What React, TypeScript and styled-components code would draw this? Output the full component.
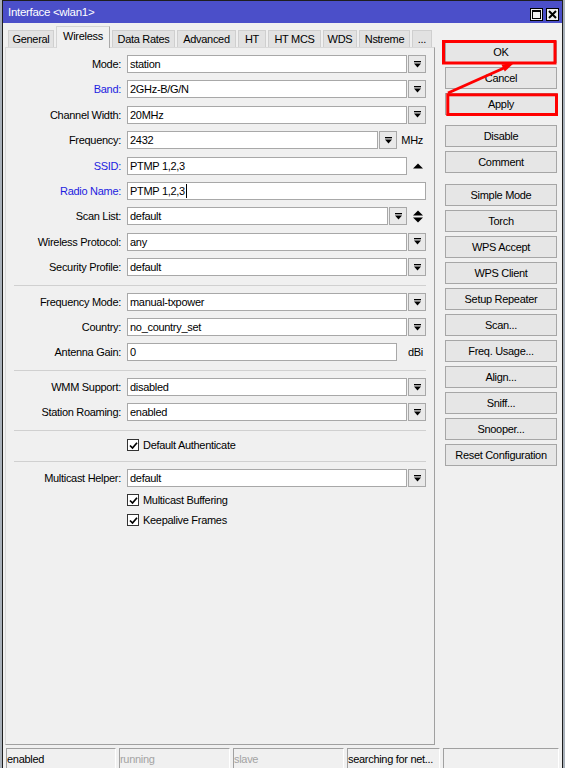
import styled, { createGlobalStyle } from "styled-components";

const GlobalStyle = createGlobalStyle`
  html, body {
    margin: 0;
    padding: 0;
    overflow: hidden;
  }
  body {
    background: #a9b1ba;
    font-family: "Liberation Sans", Arial, sans-serif;
    font-size: 11px;
    letter-spacing: -0.3px;
    color: #000;
  }
`;

const Desktop = styled.div`
  position: relative;
  width: 565px;
  height: 768px;
  overflow: hidden;
`;

const Window = styled.div`
  margin-left: 2px;
  width: 561px;
  height: 768px;
  box-sizing: border-box;
  border: 1px solid #1e1e1e;
  border-bottom: none;
  background: #f0f0f0;
  display: flex;
  flex-direction: column;
`;

const TitleBar = styled.div`
  height: 22px;
  flex-shrink: 0;
  background: #4b4fc9;
  color: #fff;
  display: flex;
  align-items: center;
  justify-content: space-between;
  padding: 0 3px 0 5px;
`;

const TitleText = styled.span`
  font-size: 11.5px;
`;

const TitleButtons = styled.div`
  display: flex;
  gap: 3px;
  margin-top: 5px;
`;

const TitleButton = styled.div`
  width: 13px;
  height: 13px;
  box-sizing: border-box;
  border: 1px solid #000;
  background: #f0f0f0;
  display: flex;
  align-items: center;
  justify-content: center;
`;

const Body = styled.div`
  flex: 1;
  display: flex;
  padding: 3px 4px 3px 2px;
  min-height: 0;
`;

const LeftColumn = styled.div`
  width: 430px;
  display: flex;
  flex-direction: column;
`;

const Tabs = styled.div`
  height: 21px;
  display: flex;
  align-items: flex-end;
  gap: 2px;
  padding-left: 3px;
`;

const Tab = styled.div<{ $active?: boolean; $w: number }>`
  width: ${(p) => p.$w}px;
  height: ${(p) => (p.$active ? 22 : 17)}px;
  box-sizing: border-box;
  margin-bottom: ${(p) => (p.$active ? -1 : 0)}px;
  border: 1px solid ${(p) => (p.$active ? "#d4d4d4" : "#cfcfcf")};
  border-right-color: ${(p) => (p.$active ? "#a9a9a9" : "#cfcfcf")};
  border-bottom: none;
  background: ${(p) => (p.$active ? "#f0f0f0" : "#e2e2e2")};
  display: flex;
  align-items: center;
  justify-content: center;
  padding-bottom: ${(p) => (p.$active ? 3 : 0)}px;
  white-space: nowrap;
  z-index: ${(p) => (p.$active ? 1 : 0)};
`;

const Panel = styled.div`
  flex: 1;
  box-sizing: border-box;
  border: 1px solid #d9d9d9;
  border-right-color: #a0a0a0;
  border-bottom-color: #a0a0a0;
  padding-top: 7px;
  display: flex;
  flex-direction: column;
`;

const Section = styled.div<{ $gap: number }>`
  display: flex;
  flex-direction: column;
  gap: ${(p) => p.$gap}px;
`;

const Separator = styled.div`
  height: 1px;
  width: 412px;
  margin: 8.5px 0 7.5px 8px;
  background: #d0d0d0;
`;

const Row = styled.div<{ $h?: number }>`
  display: grid;
  grid-template-columns: 116px 299px;
  column-gap: 5px;
  height: ${(p) => p.$h ?? 18}px;
  align-items: center;
`;

const Label = styled.span<{ $blue?: boolean }>`
  text-align: right;
  padding-right: 1px;
  white-space: nowrap;
  color: ${(p) => (p.$blue ? "#1d1de0" : "#000")};
`;

const Field = styled.div`
  display: flex;
  height: 18px;
`;

const Input = styled.div`
  flex: 1;
  min-width: 0;
  box-sizing: border-box;
  border: 1px solid #a8a8a8;
  background: #fff;
  padding-left: 2px;
  display: flex;
  align-items: center;
  white-space: nowrap;
  overflow: hidden;
`;

const Caret = styled.span`
  display: inline-block;
  width: 1px;
  height: 14px;
  margin-left: 1px;
  background: #000;
`;

const DropButton = styled.div`
  width: 18px;
  margin-left: 1px;
  box-sizing: border-box;
  border: 1px solid #a8a8a8;
  background: #e9e9e9;
  display: flex;
  align-items: center;
  justify-content: center;
`;

const Trail = styled.div<{ $w: number }>`
  width: ${(p) => p.$w}px;
  box-sizing: border-box;
  padding-right: 3px;
  display: flex;
  align-items: center;
  justify-content: flex-end;
`;

const CheckGroup = styled.div`
  display: flex;
  flex-direction: column;
  gap: 6px;
  margin-top: 6px;
`;

const CheckLine = styled.div`
  display: flex;
  align-items: center;
  gap: 4px;
`;

const CheckBox = styled.div`
  width: 12px;
  height: 12px;
  box-sizing: border-box;
  border: 1px solid #333;
  background: #fff;
  display: flex;
  align-items: center;
  justify-content: center;
`;

const RightColumn = styled.div`
  width: 112px;
  margin-left: 10px;
  padding-top: 14.5px;
  display: flex;
  flex-direction: column;
  gap: 10.5px;
`;

const ButtonGroup = styled.div`
  display: flex;
  flex-direction: column;
  gap: 4px;
`;

const Button = styled.div`
  height: 22px;
  box-sizing: border-box;
  border: 1px solid #a6a6a6;
  background: #e6e6e6;
  display: flex;
  align-items: center;
  justify-content: center;
  white-space: nowrap;
`;

const StatusBar = styled.div`
  height: 20px;
  flex-shrink: 0;
  display: flex;
  gap: 3px;
  padding-left: 3px;
`;

const StatusCell = styled.div<{ $w: number; $dim?: boolean }>`
  width: ${(p) => p.$w}px;
  height: 22px;
  box-sizing: border-box;
  border-top: 1px solid #a0a0a0;
  border-left: 1px solid #a0a0a0;
  border-right: 1px solid #fff;
  display: flex;
  align-items: center;
  padding-bottom: 2px;
  color: ${(p) => (p.$dim ? "#a3a3a3" : "#000")};
  white-space: nowrap;
`;

const Annotation = styled.svg`
  position: absolute;
  left: 0;
  top: 0;
  pointer-events: none;
`;

const DropIcon = () => (
  <svg width="7" height="7" viewBox="0 0 7 7">
    <rect x="0" y="0" width="7" height="1.3" fill="#000" />
    <polygon points="0,2.4 7,2.4 3.5,6.4" fill="#000" />
  </svg>
);

const UpIcon = () => (
  <svg width="10" height="6" viewBox="0 0 10 6">
    <polygon points="0,5.5 10,5.5 5,0.5" fill="#000" />
  </svg>
);

const UpDownIcon = () => (
  <svg width="10" height="13" viewBox="0 0 10 13">
    <polygon points="0,5.5 10,5.5 5,0.5" fill="#000" />
    <polygon points="0,7.5 10,7.5 5,12.5" fill="#000" />
  </svg>
);

const CheckMark = () => (
  <svg width="9" height="9" viewBox="0 0 9 9">
    <polyline points="1,4.5 3.5,7 8,1.8" fill="none" stroke="#000" strokeWidth="1.7" />
  </svg>
);

interface FieldDef {
  label: string;
  value: string;
  blue?: boolean;
  drop?: boolean;
  unit?: string;
  arrow?: "up" | "updown";
  caret?: boolean;
}

const tabs = [
  { name: "General", w: 46 },
  { name: "Wireless", w: 54, active: true },
  { name: "Data Rates", w: 63 },
  { name: "Advanced", w: 59 },
  { name: "HT", w: 28 },
  { name: "HT MCS", w: 53 },
  { name: "WDS", w: 34 },
  { name: "Nstreme", w: 51 },
  { name: "...", w: 20 },
];

const mainFields: FieldDef[] = [
  { label: "Mode", value: "station", drop: true },
  { label: "Band", value: "2GHz-B/G/N", blue: true, drop: true },
  { label: "Channel Width", value: "20MHz", drop: true },
  { label: "Frequency", value: "2432", drop: true, unit: "MHz" },
  { label: "SSID", value: "PTMP 1,2,3", blue: true, arrow: "up" },
  { label: "Radio Name", value: "PTMP 1,2,3", blue: true, caret: true },
  { label: "Scan List", value: "default", drop: true, arrow: "updown" },
  { label: "Wireless Protocol", value: "any", drop: true },
  { label: "Security Profile", value: "default", drop: true },
];

const countryFields: FieldDef[] = [
  { label: "Frequency Mode", value: "manual-txpower", drop: true },
  { label: "Country", value: "no_country_set", drop: true },
  { label: "Antenna Gain", value: "0", unit: "dBi" },
];

const wmmFields: FieldDef[] = [
  { label: "WMM Support", value: "disabled", drop: true },
  { label: "Station Roaming", value: "enabled", drop: true },
];

const buttonGroups = [
  ["OK", "Cancel", "Apply"],
  ["Disable", "Comment"],
  [
    "Simple Mode",
    "Torch",
    "WPS Accept",
    "WPS Client",
    "Setup Repeater",
    "Scan...",
    "Freq. Usage...",
    "Align...",
    "Sniff...",
    "Snooper...",
    "Reset Configuration",
  ],
];

const statusCells = [
  { text: "enabled", w: 110 },
  { text: "running", w: 111, dim: true },
  { text: "slave", w: 111, dim: true },
  { text: "searching for net...", w: 93 },
  { text: "", w: 116 },
];

function FormRow({ f }: { f: FieldDef }) {
  return (
    <Row>
      <Label $blue={f.blue}>{f.label}:</Label>
      <Field>
        <Input>
          {f.value}
          {f.caret && <Caret />}
        </Input>
        {f.drop && (
          <DropButton>
            <DropIcon />
          </DropButton>
        )}
        {f.unit && <Trail $w={29}>{f.unit}</Trail>}
        {f.arrow && <Trail $w={19}>{f.arrow === "up" ? <UpIcon /> : <UpDownIcon />}</Trail>}
      </Field>
    </Row>
  );
}

function CheckRow({ label }: { label: string }) {
  return (
    <Row $h={14}>
      <span />
      <CheckLine>
        <CheckBox>
          <CheckMark />
        </CheckBox>
        {label}
      </CheckLine>
    </Row>
  );
}

export default function App() {
  return (
    <Desktop>
      <GlobalStyle />
      <Window>
        <TitleBar>
          <TitleText>Interface &lt;wlan1&gt;</TitleText>
          <TitleButtons>
            <TitleButton>
              <svg width="9" height="9" viewBox="0 0 9 9">
                <rect x="0.5" y="0.5" width="8" height="8" fill="none" stroke="#000" />
                <rect x="0" y="0" width="9" height="2" fill="#000" />
              </svg>
            </TitleButton>
            <TitleButton>
              <svg width="9" height="9" viewBox="0 0 9 9">
                <path d="M1 1 L8 8 M8 1 L1 8" stroke="#000" strokeWidth="2" />
              </svg>
            </TitleButton>
          </TitleButtons>
        </TitleBar>

        <Body>
          <LeftColumn>
            <Tabs>
              {tabs.map((t) => (
                <Tab key={t.name} $w={t.w} $active={t.active}>
                  {t.name}
                </Tab>
              ))}
            </Tabs>
            <Panel>
              <Section $gap={7.4}>
                {mainFields.map((f) => (
                  <FormRow key={f.label} f={f} />
                ))}
              </Section>
              <Separator />
              <Section $gap={7}>
                {countryFields.map((f) => (
                  <FormRow key={f.label} f={f} />
                ))}
              </Section>
              <Separator />
              <Section $gap={7}>
                {wmmFields.map((f) => (
                  <FormRow key={f.label} f={f} />
                ))}
              </Section>
              <Separator />
              <CheckRow label="Default Authenticate" />
              <Separator />
              <FormRow f={{ label: "Multicast Helper", value: "default", drop: true }} />
              <CheckGroup>
                <CheckRow label="Multicast Buffering" />
                <CheckRow label="Keepalive Frames" />
              </CheckGroup>
            </Panel>
          </LeftColumn>

          <RightColumn>
            {buttonGroups.map((g, i) => (
              <ButtonGroup key={i}>
                {g.map((b) => (
                  <Button key={b}>{b}</Button>
                ))}
              </ButtonGroup>
            ))}
          </RightColumn>
        </Body>

        <StatusBar>
          {statusCells.map((c, i) => (
            <StatusCell key={i} $w={c.w} $dim={c.dim}>
              {c.text}
            </StatusCell>
          ))}
        </StatusBar>
      </Window>

      <Annotation width="565" height="130" viewBox="0 0 565 130">
        <rect x="443.5" y="41.5" width="111.5" height="21.5" fill="none" stroke="#ff0000" strokeWidth="3" />
        <rect x="447.8" y="94.8" width="108.7" height="19.7" fill="none" stroke="#ff0000" strokeWidth="3" />
        <line x1="448" y1="93" x2="504" y2="68" stroke="#ff0000" strokeWidth="3" />
        <polygon points="514,63 504.8,71.6 501.4,64.4" fill="#ff0000" />
      </Annotation>
    </Desktop>
  );
}
